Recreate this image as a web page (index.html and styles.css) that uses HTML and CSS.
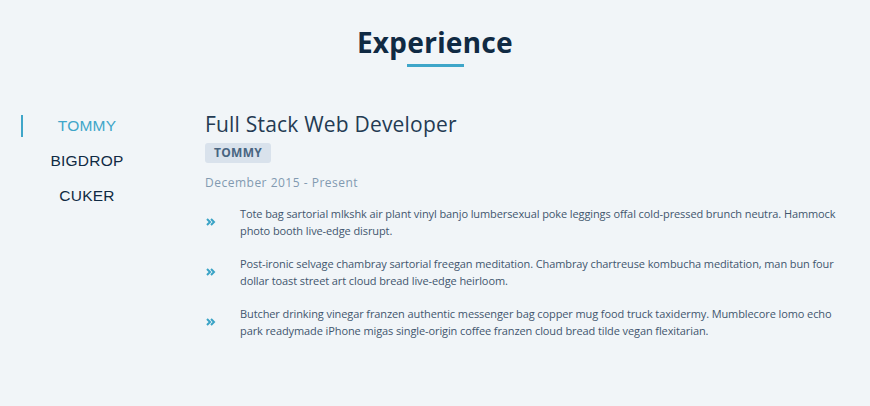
FILE: index.html
```html
<!DOCTYPE html>
<html>
<head>
<meta charset="utf-8">
<link rel="stylesheet" href="styles.css">
</head>
<body>
<section class="experience">
  <h2 class="title">Experience</h2>
  <div class="title-line"></div>
  <div class="layout">
    <ul class="tabs">
      <li class="tab active">TOMMY</li>
      <li class="tab">BIGDROP</li>
      <li class="tab">CUKER</li>
    </ul>
    <div class="job">
      <h3 class="job-title">Full Stack Web Developer</h3>
      <span class="badge">TOMMY</span>
      <p class="date">December 2015 - Present</p>
      <ul class="duties">
        <li class="duty">
          <svg class="icon" viewBox="0 0 10 10"><path d="M1 2l3 3-3 3M5 2l3 3-3 3" fill="none" stroke="#3aa3c6" stroke-width="2"/></svg>
          <p>Tote bag sartorial mlkshk air plant vinyl banjo lumbersexual poke leggings offal cold-pressed brunch neutra. Hammock photo booth live-edge disrupt.</p>
        </li>
        <li class="duty">
          <svg class="icon" viewBox="0 0 10 10"><path d="M1 2l3 3-3 3M5 2l3 3-3 3" fill="none" stroke="#3aa3c6" stroke-width="2"/></svg>
          <p>Post-ironic selvage chambray sartorial freegan meditation. Chambray chartreuse kombucha meditation, man bun four dollar toast street art cloud bread live-edge heirloom.</p>
        </li>
        <li class="duty">
          <svg class="icon" viewBox="0 0 10 10"><path d="M1 2l3 3-3 3M5 2l3 3-3 3" fill="none" stroke="#3aa3c6" stroke-width="2"/></svg>
          <p>Butcher drinking vinegar franzen authentic messenger bag copper mug food truck taxidermy. Mumblecore lomo echo park readymade iPhone migas single-origin coffee franzen cloud bread tilde vegan flexitarian.</p>
        </li>
      </ul>
    </div>
  </div>
</section>
</body>
</html>
```
FILE: styles.css
```css
html, body {
  margin: 0;
  padding: 0;
  background: #f1f5f8;
}
.experience {
  padding: 22px 20px 0 20px;
  font-family: "Open Sans", sans-serif;
}
.title {
  margin: 0;
  text-align: center;
  font-family: "Noto Sans", sans-serif;
  font-size: 28px;
  font-weight: 700;
  letter-spacing: 0.3px;
  color: #102a43;
  line-height: 40px;
}
.title-line {
  width: 57px;
  height: 3px;
  background: #3fa6c9;
  margin: 2px auto 0;
}
.layout {
  display: flex;
  margin-top: 41px;
}
.tabs {
  list-style: none;
  margin: 0 0 0 1px;
  padding: 0;
  width: 132px;
  flex-shrink: 0;
}
.tab {
  position: relative;
  height: 35px;
  line-height: 35px;
  text-align: center;
  font-family: "Liberation Sans", Arial, sans-serif;
  font-size: 15.5px;
  letter-spacing: 0.2px;
  color: #102a43;
}
.tab.active {
  color: #3fa6c9;
}
.tab.active::before {
  content: "";
  position: absolute;
  left: 0;
  top: 7px;
  width: 2px;
  height: 22px;
  background: #3fa6c9;
}
.job {
  margin-left: 52px;
  padding-top: 2px;
  flex: 1;
}
.job-title {
  margin: 0;
  font-family: "Open Sans", sans-serif;
  font-weight: 400;
  font-size: 21px;
  line-height: 28px;
  letter-spacing: 0.2px;
  color: #243b53;
}
.badge {
  display: inline-block;
  margin-top: 5px;
  padding: 0 9px;
  height: 20px;
  line-height: 20px;
  border-radius: 3px;
  background: #d9e2ec;
  color: #486581;
  font-size: 12px;
  font-weight: 700;
  letter-spacing: 0.3px;
}
.date {
  margin: 11px 0 0;
  font-size: 12px;
  letter-spacing: 0.5px;
  color: #829ab1;
  line-height: 18px;
}
.duties {
  list-style: none;
  margin: 13px 0 0;
  padding: 0;
}
.duty {
  display: flex;
  align-items: center;
  margin-bottom: 16px;
}
.icon {
  width: 10px;
  height: 10px;
  flex-shrink: 0;
  margin: 0 24px 0 1px;
}
.duty p {
  margin: 0;
  font-size: 11px;
  line-height: 17px;
  letter-spacing: -0.1px;
  color: #42566e;
}
```
